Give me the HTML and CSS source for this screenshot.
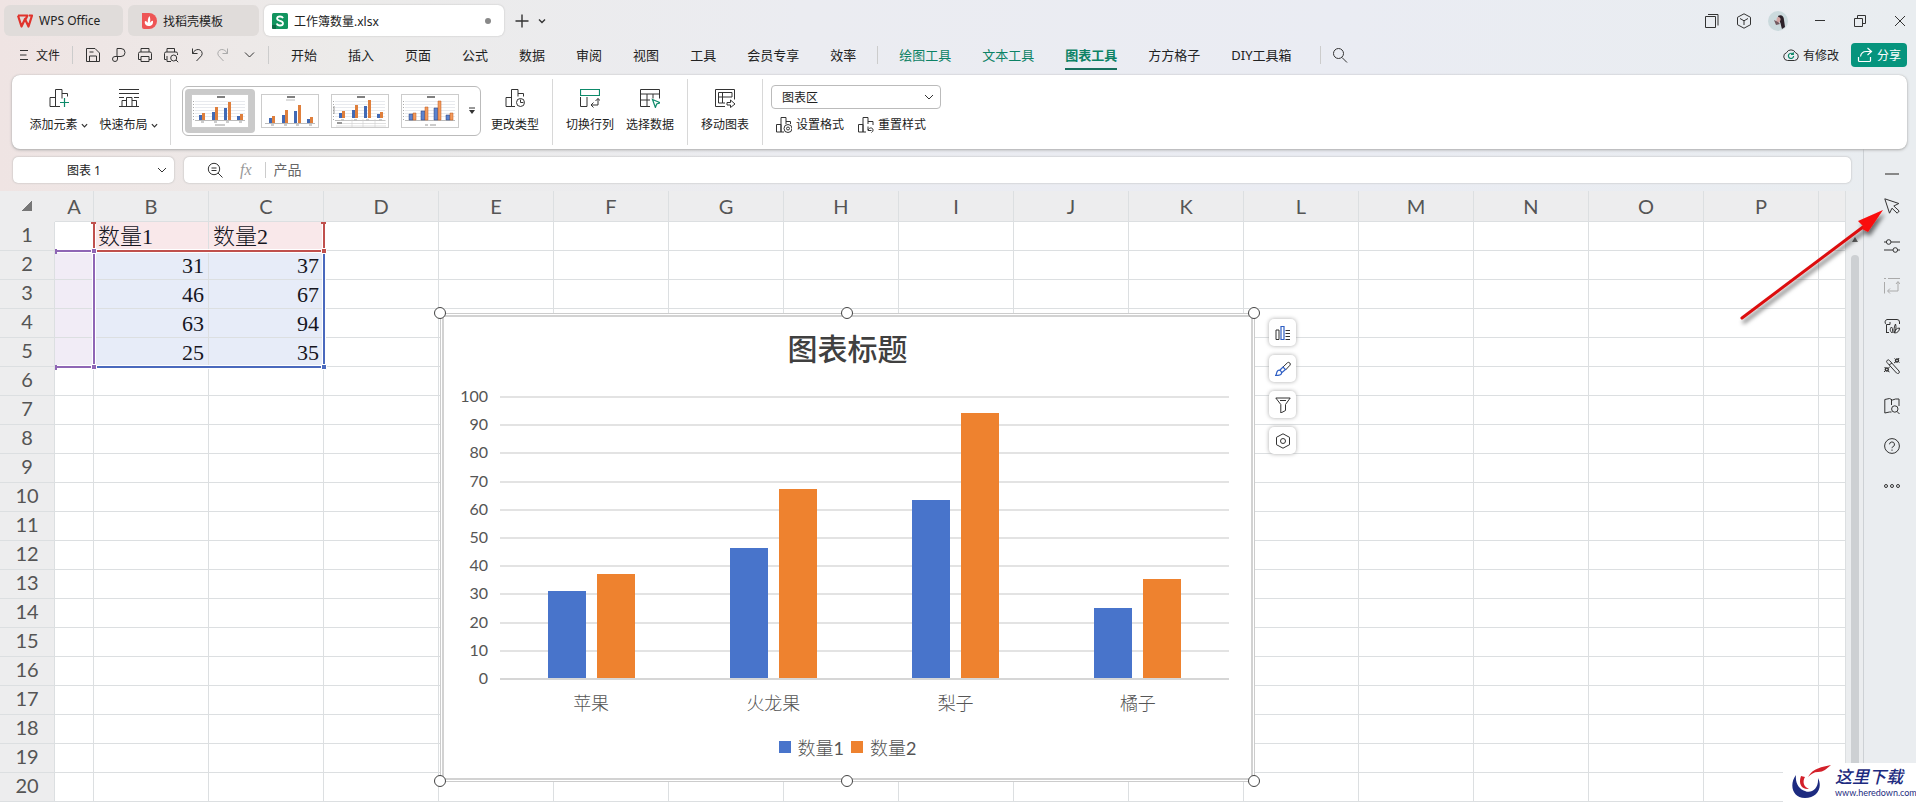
FILE: index.html
```html
<!DOCTYPE html>
<html lang="zh-CN">
<head>
<meta charset="utf-8">
<title>工作簿数量.xlsx - WPS Office</title>
<link rel="stylesheet" href="styles.css">
</head>
<body>
<header class="top">
  <div class="tabbar">
    <a class="tab tab-home" href="#"><svg class="i16" viewBox="0 0 16 16"><path d="M1 2.500h9.500L8 7.500M1 2.500l3.500 11L8 6l3.500 7.500L15 2.500h-3" fill="none" stroke="#e0332c" stroke-width="2.200" stroke-linejoin="round"/></svg>WPS Office</a>
    <a class="tab tab-docer" href="#"><svg class="i16" viewBox="0 0 16 16"><path d="M1 0h7a8 8 0 0 1 0 16H3a2 2 0 0 1-2-2z" fill="#ee5555"/><path d="M7.500 13c-4-.5-4-4-3.500-5 1.500.3 2.500 1 3 2-.6-2.800 0-5 1.500-7 1 2.500 1 4.500.3 7 .7-1.200 1.700-2 3.200-2.300C12.300 11 11 13 7.500 13z" fill="#fff"/></svg>找稻壳模板</a>
    <a class="tab tab-file" href="#"><svg class="i16" viewBox="0 0 16 16"><rect width="16" height="16" rx="1.500" fill="#12945f"/><path d="M0 12h4v4H1.500A1.500 1.500 0 0 1 0 14.500z" fill="#0c6b45"/><path d="M11 5.200C10.500 4 9.500 3.500 8 3.500c-1.700 0-2.900.8-2.900 2.100C5.100 8.700 11 7 11 10.200c0 1.500-1.300 2.300-3 2.300-1.600 0-2.800-.7-3.200-2" fill="none" stroke="#fff" stroke-width="1.800"/></svg><span class="grow">工作簿数量.xlsx</span><i class="dot"></i></a>
    <button class="bare" aria-label="新建"><svg class="i16" viewBox="0 0 16 16"><path d="M8 1.500v13M1.500 8h13" class="s2"/></svg></button>
    <button class="bare" aria-label="标签列表"><svg class="i8" viewBox="0 0 8 8"><path d="M1 2.500l3 3 3-3" class="s2"/></svg></button>
    <div class="window">
      <button class="bare" aria-label="窗口"><svg class="i16" viewBox="0 0 16 16"><path d="M1.500 3.500h10v11h-10zM4 1.500h10v11" class="s"/></svg></button>
      <button class="bare" aria-label="应用"><svg class="i16" viewBox="0 0 16 16"><path d="M8 .8l6.500 3.500v7.400L8 15.200l-6.500-3.500V4.300zM4 5.500l4 2.300 4-2.300M8 7.800V12" class="s"/></svg></button>
      <button class="bare" aria-label="账户"><svg class="i20" viewBox="0 0 20 20"><circle cx="10" cy="10" r="10" fill="#cbdadd"/><path d="M10 5c3-2 6 0 6 4l1 7-3 2c-1-3-1-5-2-7z" fill="#2b2129"/><path d="M9 6.500c2-1.500 4 0 3.500 2.500L11 12 8 11z" fill="#d3a6a4"/><path d="M6 9l4 2 2 2-4 1z" fill="#735a60"/></svg></button>
      <button class="bare" aria-label="最小化"><svg class="i16" viewBox="0 0 16 16"><path d="M3 7.500h10" class="s"/></svg></button>
      <button class="bare" aria-label="还原"><svg class="i16" viewBox="0 0 16 16"><path d="M2.500 5.500h8v8h-8zM5.500 5.500v-3h8v8h-3" class="s"/></svg></button>
      <button class="bare" aria-label="关闭"><svg class="i16" viewBox="0 0 16 16"><path d="M3 3l10 10M13 3L3 13" class="s"/></svg></button>
    </div>
  </div>
  <nav class="menubar">
    <button class="file"><svg viewBox="0 0 10 12" width="10" height="12"><path d="M1 1.500h8M1 6h6.500M1 10.500h8" class="s"/></svg>文件</button>
    <i class="rule"></i>
    <div class="qat">
      <button class="bare" aria-label="保存"><svg class="i16" viewBox="0 0 16 16"><path d="M1.500 1.500h8.500l4.500 4.500v8.500h-13zM4.500 14.500V9h7v5.500M4.500 5h4" class="s"/></svg></button>
      <button class="bare" aria-label="导出"><svg class="i16" viewBox="0 0 16 16"><path d="M6 10V1.500h4a4 4 0 0 1 0 8H4a2.500 2.500 0 1 0 2.500 2.500V9.500" class="s"/></svg></button>
      <button class="bare" aria-label="打印"><svg class="i16" viewBox="0 0 16 16"><path d="M4 5V1.500h8V5M4 12.500H1.500v-6A1.500 1.500 0 0 1 3 5h10a1.500 1.500 0 0 1 1.500 1.500v6H12M4 9.500h8v5H4z" class="s"/></svg></button>
      <button class="bare" aria-label="打印预览"><svg class="i16" viewBox="0 0 16 16"><path d="M4 5V1.500h7.500V5M3.500 12.500h-2v-6A1.500 1.500 0 0 1 3 5h10a1.500 1.500 0 0 1 1.500 1.500V8M4 9v5.500h4M13 13l2.200 2.200" class="s"/><circle cx="10.700" cy="11" r="3" class="s"/></svg></button>
      <button class="bare" aria-label="撤销"><svg class="i16" viewBox="0 0 16 16"><path d="M3.500 1.500v5h5M3.500 6.500C5 3.800 7 2.500 9.200 2.500a4 4 0 0 1 3.300 6.200L7.500 14" class="s"/></svg></button>
      <button class="bare faint" aria-label="恢复"><svg class="i16" viewBox="0 0 16 16"><path d="M12.500 1.500v5h-5M12.500 6.500C11 3.800 9 2.500 6.800 2.500a4 4 0 0 0-3.300 6.200L8.500 14" class="s"/></svg></button>
      <button class="bare" aria-label="更多"><svg class="i16" viewBox="0 0 16 16"><path d="M4 5.500l4.500 4.500L13 5.500" class="s"/></svg></button>
    </div>
    <i class="rule rule-wide"></i>
    <div class="menus">
      <a href="#">开始</a><a href="#">插入</a><a href="#">页面</a><a href="#">公式</a><a href="#">数据</a><a href="#">审阅</a><a href="#">视图</a><a href="#">工具</a><a href="#">会员专享</a><a href="#">效率</a>
    </div>
    <i class="rule rule-mid"></i>
    <div class="menus">
      <a class="green" href="#">绘图工具</a><a class="green" href="#">文本工具</a><a class="green on" href="#">图表工具</a><a href="#">方方格子</a><a href="#">DIY工具箱</a>
    </div>
    <i class="rule rule-end"></i>
    <button class="bare" aria-label="搜索"><svg class="i16" viewBox="0 0 16 16"><circle cx="6.500" cy="6.500" r="5" class="s"/><path d="M10 10.500l5 5" class="s"/></svg></button>
    <div class="actions">
      <button class="status"><svg class="i16" viewBox="0 0 16 16"><path d="M4.500 13.500a4 4 0 0 1-1-7.800 5 5 0 0 1 9 0 4 4 0 0 1-1 7.800z" class="s"/><path d="M10 7.200A2.600 2.600 0 1 0 10.600 9M10.300 5.200v2.300H8" class="g"/></svg>有修改</button>
      <button class="share"><svg class="i16" viewBox="0 0 16 16"><path d="M10.500 1l4 3.500-4 3.500M14 4.500H9c-3 0-5 2-5.500 5M1.500 10v3.500a1 1 0 0 0 1 1h10a1 1 0 0 0 1-1V10" fill="none" stroke="#fff" stroke-width="1.200"/></svg>分享</button>
    </div>
  </nav>
</header>

<section class="ribbon">
  <div class="group group-first">
    <button class="tool"><svg class="i20" viewBox="0 0 20 20"><path d="M1 18.500v-9h5.500v9zM6.500 18.500V1.500H13v9M13 5.500h5.500v3M6.500 18.500H11" class="s"/><path d="M15.500 10v9M11 14.500h9" class="g"/></svg><span>添加元素<svg class="caret" viewBox="0 0 8 8"><path d="M1 2.500l3 3 3-3" class="s2"/></svg></span></button>
    <button class="tool"><svg class="i20" viewBox="0 0 20 20"><path d="M0 1.500h20M0 5.500h20M0 9.500h5M15 9.500h5M0 18.500h20M3 18.500v-6h4.500M7.500 18.500v-9H13v9M13 12.500h4.500v6" class="s"/></svg><span>快速布局<svg class="caret" viewBox="0 0 8 8"><path d="M1 2.500l3 3 3-3" class="s2"/></svg></span></button>
  </div>
  <div class="group group-style">
    <div class="gallery">
      <button class="thumb picked" aria-label="样式 1"><svg viewBox="0 0 56 32"><use href="#mini-back"/><use href="#mini-bars"/><path d="M23 30h10" stroke="#999"/></svg></button>
      <button class="thumb" aria-label="样式 2"><svg viewBox="0 0 56 32"><rect width="56" height="32" fill="#fff"/><path d="M25 2h8" stroke="#555" stroke-width="1.500"/><path d="M24 5h9" stroke="#bbb"/><use href="#mini-bars" y="3"/><path d="M3 28.500h50" stroke="#bbb"/></svg></button>
      <button class="thumb" aria-label="样式 3"><svg viewBox="0 0 56 32"><use href="#mini-back"/><use href="#mini-bars" y="-2"/><path d="M8 25.500h46M8 28.500h46M4 31h50M20 24v8M31 24v8M43 24v8" stroke="#ccc" stroke-width=".6"/><path d="M2 11v8" stroke="#999"/><path d="M5 28h5" stroke="#999" stroke-width="2"/></svg></button>
      <button class="thumb" aria-label="样式 4"><svg viewBox="0 0 56 32"><use href="#mini-back"/><g stroke="#283f76" stroke-width=".5" fill="#5b83cf"><path d="M7 19h4v6H7zM19 16h4v9h-4zM32 13h4v12h-4zM44 20h4v5h-4z"/></g><g stroke="#bd5719" stroke-width=".5" fill="#f29b5e"><path d="M11 18h3v7h-3zM23 12h3v13h-3zM36 6h3v19h-3zM48 18h3v7h-3z"/></g><path d="M23 30h3M28 30h6" stroke="#999"/></svg></button>
      <button class="more" aria-label="更多样式"><svg viewBox="0 0 6 8" width="6" height="8"><path d="M0 1h6" stroke="#333"/><path d="M0 3h6L3 7z" fill="#333"/></svg></button>
    </div>
    <button class="tool"><svg class="i20" viewBox="0 0 20 20"><path d="M1 18.500v-9h5.500v9zM6.500 18.500V1.500H13v7M13 5.500h5.500v3M6.500 18.500H10" class="s"/><circle cx="15.500" cy="14.500" r="4" class="s"/><path d="M15.500 11.500v3h3" class="s"/></svg><span>更改类型</span></button>
  </div>
  <div class="group">
    <button class="tool"><svg class="i20" viewBox="0 0 20 20"><path d="M.5 1.500h19v6H.5z" class="g"/><path d="M.5 9v9.500H7V9M18 10.500v6.500h-7M15.500 13l2.500-2.500 2.500 2.500M13.500 14.500L11 17l2.500 2.500" class="s"/></svg><span>切换行列</span></button>
    <button class="tool"><svg class="i20" viewBox="0 0 20 20"><path d="M10 18.500H.5v-17h19v9M.5 6h19M.5 12H10M7 6v12.500M13 6v4.500" class="s"/><path d="M12.500 11.500l8 3.300-3.800 1.200-1.300 3.500z" class="g"/></svg><span>选择数据</span></button>
  </div>
  <div class="group">
    <button class="tool"><svg class="i20" viewBox="0 0 20 20"><path d="M10 18.500H.500v-17h19v10M3.500 15V4.500H17V9H3.500M7.500 4.500V15h-4M7.500 15H10M12 14.500h3.500V12l4.500 4-4.500 3.500V17H12z" class="s"/></svg><span>移动图表</span></button>
  </div>
  <div class="format">
    <div class="combo"><select aria-label="图表元素"><option>图表区</option></select><svg class="i8 chev" viewBox="0 0 8 8"><path d="M0 2l4 4 4-4" class="s"/></svg></div>
    <div class="links">
      <button class="link"><svg class="i16" viewBox="0 0 16 16"><path d="M.5 15V7.500H5V15zM5 15V.5h5V7M10 4.500h4.500V7M5 15h3" class="s"/><circle cx="12" cy="11.500" r="4" class="s"/><circle cx="12" cy="11.500" r="1.500" class="s"/></svg>设置格式</button>
      <button class="link"><svg class="i16" viewBox="0 0 16 16"><path d="M.5 15V7.500H5V15zM5 15V.5h5V7M10 4.500h5V8M5 15h3M10 9.500v4h3.500M10 13c1.500-3 5-2.500 5 0 0 1.500-.8 2-1.500 2.500" class="s"/></svg>重置样式</button>
    </div>
  </div>
</section>

<main class="main">
  <div class="work">
    <div class="formula">
      <div class="namebox"><input aria-label="名称框" value="图表 1"><svg class="i8 chev" viewBox="0 0 8 8"><path d="M0 2l4 4 4-4" class="s"/></svg></div>
      <div class="fxbox">
        <button class="bare" aria-label="查找"><svg class="i16" viewBox="0 0 16 16"><circle cx="7" cy="7" r="5.700" class="s"/><path d="M11 11l4.500 4.500M4.500 6h5M4.500 8.500h5" class="s"/></svg></button>
        <span class="fx">fx</span><i class="rule rule-fx"></i>
        <input aria-label="编辑栏" value="产品">
      </div>
    </div>
    <div class="sheet">
      <table class="cells">
        <colgroup id="cols"></colgroup>
        <thead><tr id="heads"></tr></thead>
        <tbody id="rows"></tbody>
      </table>
      <div class="scroll"><svg viewBox="0 0 8 6" width="8" height="6"><path d="M4 0l3 5H1z" fill="#666"/></svg><i></i></div>
      <svg class="ranges" width="290" height="190" viewBox="0 0 290 190">
        <g fill="none" stroke-width="4" stroke="#fff"><path d="M39 31v29h230V31M2 60h37v116H2M269 60v116H39"/></g>
        <g fill="none" stroke-width="2"><path d="M40 60h229v116H40" stroke="#4a69bd"/><path d="M39 32v28h230V32" stroke="#c0504d"/><path d="M2 60h37v116H2" stroke="#8f66b5"/></g>
        <g stroke="#fff"><path d="M266.500 173.500h5v5h-5z" fill="#4a69bd"/><path d="M266.500 57.500h5v5h-5z" fill="#c0504d"/><path d="M36.500 57.500h5v5h-5zM36.500 173.500h5v5h-5z" fill="#8f66b5"/></g>
        <path d="M36 31h5v2h-5zM266 31h5v2h-5z" fill="#c0504d"/><path d="M0 58h2v5H0zM0 174h2v5H0z" fill="#8f66b5"/>
      </svg>
      <figure class="chart">
        <div class="chart-in">
          <figcaption>图表标题</figcaption>
          <div class="plotrow">
            <ol class="axis"><li>100</li><li>90</li><li>80</li><li>70</li><li>60</li><li>50</li><li>40</li><li>30</li><li>20</li><li>10</li><li>0</li></ol>
            <div class="plot">
              <div class="lines"><i></i><i></i><i></i><i></i><i></i><i></i><i></i><i></i><i></i><i></i><i></i></div>
              <div class="bars">
                <div><b style="height:31%"></b><b style="height:37%"></b></div>
                <div><b style="height:46%"></b><b style="height:67%"></b></div>
                <div><b style="height:63%"></b><b style="height:94%"></b></div>
                <div><b style="height:25%"></b><b style="height:35%"></b></div>
              </div>
            </div>
          </div>
          <div class="cats"><span>苹果</span><span>火龙果</span><span>梨子</span><span>橘子</span></div>
          <div class="legend"><i></i><span>数量<em>1</em></span><i class="two"></i><span>数量<em>2</em></span></div>
        </div>
        <i class="h tl"></i><i class="h tc"></i><i class="h tr"></i><i class="h bl"></i><i class="h bc"></i><i class="h br"></i>
        <div class="chart-tools">
          <button aria-label="图表元素"><svg class="i16" viewBox="0 0 16 16"><path d="M1 5h3v9.500H1zM10.500 5.500H15M10.500 8.500H15M10.500 11.500H15M10.500 14.500H15" class="s"/><path d="M6 1.500h3v13H6z" class="b"/></svg></button>
          <button aria-label="图表样式"><svg class="i16" viewBox="0 0 16 16"><path d="M8 6l4.500-4.300a1.800 1.800 0 0 1 2.500 2.500L10.500 9" class="s"/><path d="M.5 14.500c1.500-1 .5-3.500 2.500-5 1.500-1 4 .5 3.500 3-.5 2-3 2-6 2zM5 9l3-3 2.500 2.500-3.500 3" class="b"/></svg></button>
          <button aria-label="图表筛选器"><svg class="i16" viewBox="0 0 16 16"><path d="M.8 1h14.400L10.500 7.500v6L5.800 16V7.500zM5 3.500h6" class="s"/></svg></button>
          <button aria-label="设置图表区域格式"><svg class="i16" viewBox="0 0 16 16"><path d="M8 .8l6.500 3.500v7.400L8 15.200l-6.500-3.500V4.300z" class="s"/><circle cx="8" cy="8" r="2.500" class="s"/></svg></button>
        </div>
      </figure>
    </div>
  </div>
  <aside class="side">
    <button class="bare fold" aria-label="收起"><svg class="i16" viewBox="0 0 16 16"><path d="M1 8h14" stroke="#888" stroke-width="2"/></svg></button>
    <button class="bare" aria-label="选择"><svg class="i16" viewBox="0 0 16 16"><path d="M.8.800l14 4.700-5 2.500 5.400 5-2 2.200-5.200-5-2.500 5z" class="s"/></svg></button>
    <button class="bare" aria-label="属性"><svg class="i16" viewBox="0 0 16 16"><path d="M0 4h2.500M7 4h9M0 12h9M13.500 12H16" class="s"/><circle cx="4.700" cy="4" r="2.300" class="s"/><circle cx="11.300" cy="12" r="2.300" class="s"/></svg></button>
    <button class="bare faint" aria-label="转换"><svg class="i16" viewBox="0 0 16 16"><path d="M0 .5h2M4 .5h12M.5 4v11.500M14 4v9H4M12 6l2-2.500L16 6M6 10.500L3.500 13 6 15.500" class="s"/></svg></button>
    <button class="bare" aria-label="分析"><svg class="i16" viewBox="0 0 16 16"><path d="M2 14.500h3M2.500 14.500v-8A2.700 2.700 0 0 1 3 1.500h10a2.500 2.500 0 0 1 2.500 2.500v2M3 6.500h3V4M7.500 9c-2 2-1.500 4 .5 6 1-2 1-4-.5-6zM10 15c0-4 0-6 1.500-9 1 3 .5 6-1.500 9zM10.500 15c.5-3 2-5 5-5 0 3-2 5-5 5z" class="s"/></svg></button>
    <button class="bare" aria-label="工具"><svg class="i16" viewBox="0 0 16 16"><path d="M3 4.500a1.600 1.600 0 0 1 2.500-2L15 13a1.600 1.600 0 0 1-2.500 2zM5 7l3-2" class="s"/><circle cx="13" cy="2.500" r="1.500" class="s2"/><circle cx="2.800" cy="11.500" r="1.500" class="s2"/><path d="M14 1l1.500-1M12 3.500L10 5M1.500 12.500L0 14M4 10.500L6 8.500M1.500 10l-1-1M4 13l1.500 1M14.500 3.500l1 1M11.500 1.500L10.500.500" class="s"/></svg></button>
    <button class="bare" aria-label="帮助文档"><svg class="i16" viewBox="0 0 16 16"><path d="M7.500 14H5.500L.8 15V1.500l4.700-1 3 1.500 3-1h3.500v7M7.500 2v5" class="s"/><circle cx="10.800" cy="11" r="3.200" class="s"/><path d="M13 13.500l2.500 2.500" class="s"/></svg></button>
    <button class="bare" aria-label="帮助"><svg class="i16" viewBox="0 0 16 16"><circle cx="8" cy="8" r="7.400" class="s"/><path d="M5.500 6.300a2.500 2.500 0 1 1 3.300 2.500c-.6.300-.8.700-.8 1.400M8 11.500v1.300" class="s"/></svg></button>
    <button class="bare" aria-label="更多"><svg class="i16" viewBox="0 0 16 16"><circle cx="2" cy="8" r="1.500" class="s"/><circle cx="8" cy="8" r="1.500" class="s"/><circle cx="14" cy="8" r="1.500" class="s"/></svg></button>
  </aside>
</main>

<svg class="pointer" viewBox="0 0 160 130" width="160" height="130">
  <defs><filter id="sh" x="-20%" y="-20%" width="150%" height="150%"><feDropShadow dx="2" dy="4" stdDeviation="2" flood-opacity=".55"/></filter></defs>
  <g filter="url(#sh)"><path d="M7 114L128 23" stroke="#dc0a0f" stroke-width="3" stroke-linecap="round"/><path d="M148 6l-25 11 5 5-1 3 6 3z" fill="#f90b0b"/></g>
</svg>
<div class="brand">
  <svg viewBox="0 0 42 36" width="42" height="36"><path d="M6 11c-7 9-4 23 9 23 12 0 18-10 13-20 1 11-7 16-13 13C9 25 5 19 6 11z" fill="#1d2b80"/><path d="M11 12c-3 8 1 14 8 13-5-2-7-7-4-12zM18 13C23 4 32 3 41 1c-5 4-7 7-13 7-4 0-7 2-10 5z" fill="#d3202a"/></svg>
  <p><strong>这里下载</strong><small>www.heredown.com</small></p>
</div>

<svg width="0" height="0" class="defs">
  <defs>
    <g id="mini-back"><path d="M0 0h56v32H0z" fill="#fff"/><path d="M25 2h8" stroke="#555" stroke-width="1.500"/><path d="M3 6.500h50M3 9.500h50M3 12.500h50M3 15.500h50M3 18.500h50M3 21.500h50" stroke="#e8eaee"/><path d="M1.500 6v19" stroke="#aaa" stroke-dasharray="1 2"/><path d="M3 25.500h50" stroke="#bbb"/></g>
    <g id="mini-bars"><path d="M7 20h3v5H7zM20 17h3v8h-3zM32 13h3v12h-3zM45 21h3v4h-3z" fill="#4169b5"/><path d="M10 18h3v7h-3zM23 12h3v13h-3zM36 7h3v18h-3zM48 19h3v6h-3z" fill="#df7f3c"/><path d="M9 27h3M22 27h3M34 27h3M47 27h3" stroke="#999"/></g>
  </defs>
</svg>
<script src="sheet.js"></script>
</body>
</html>
```

FILE: styles.css
```css
* { box-sizing: border-box; }
body {
  margin: 0; height: 100vh; overflow: hidden; position: relative;
  display: flex; flex-direction: column;
  font-family: "Noto Sans", "Noto Sans CJK SC", sans-serif;
  font-size: 12px; color: #222;
  background: linear-gradient(90deg, #efe4e3 0, #ecebea 18%, #ebecf1 42%, #eaecf3 70%, #e9edf0 100%);
}
button, input, select { font: inherit; color: inherit; border: 0; padding: 0; margin: 0; background: none; }
a { color: inherit; text-decoration: none; }
svg { display: block; flex: none; }
.defs { position: absolute; }
.s, .s2, .g, .b { fill: none; stroke: #333; stroke-width: 1; }
.s2 { stroke-width: 1.400; }
.g { stroke: #0d8a6a; stroke-width: 1.200; }
.b { stroke: #2f5fc4; stroke-width: 1.200; }
.faint .s { stroke: #aaa; }
.i8 { width: 8px; height: 8px; }
.i16 { width: 16px; height: 16px; }
.i20 { width: 20px; height: 20px; }
.bare { display: flex; align-items: center; justify-content: center; }
.rule { width: 1px; height: 18px; background: #ccc; flex: none; }

.tabbar { display: flex; align-items: center; height: 37px; padding: 5px 8px 1px 4px; }
.tab { display: flex; align-items: center; gap: 6px; height: 31px; padding: 0 13px; border-radius: 6px; background: #e0dcda; margin-right: 5px; }
.tab-home { width: 119px; }
.tab-docer { width: 131px; }
.tab-file { width: 240px; padding: 0 13px 0 8px; background: #fff; box-shadow: 0 0 2px #bbb; margin-right: 10px; }
.grow { flex: 1; }
.dot { width: 6px; height: 6px; border-radius: 50%; background: #888; }
.tab-file + .bare { margin-right: 8px; }
.window { margin-left: auto; display: flex; align-items: center; gap: 24px; }
.window .bare:nth-child(1) { margin-right: -8px; }
.window .bare:nth-child(2) { margin-right: -8px; }

.menubar { display: flex; align-items: center; height: 38px; padding: 0 9px 2px 19px; }
.file { display: flex; align-items: center; gap: 7px; margin-right: 12px; }
.qat { display: flex; gap: 10px; margin-left: 12px; }
.rule-wide { margin: 0 22px 0 11px; }
.menus { display: flex; gap: 31px; font-size: 13px; line-height: 26px; }
.rule-mid { margin: 0 21px; }
.rule-end { margin: 0 11px 0 28px; }
.green { color: #0c8265; }
.on { font-weight: 700; box-shadow: 0 2px #17705e; }
.actions { margin-left: auto; display: flex; align-items: center; gap: 12px; }
.status, .share { display: flex; align-items: center; gap: 4px; }
.share { height: 24px; padding: 0 6px; background: #06947d; color: #fff; border-radius: 4px; }

.ribbon { display: flex; align-items: center; height: 74px; margin: 0 9px 0 12px; background: #fff; border-radius: 8px; box-shadow: 0 1px 3px #aaa, 0 0 1px #aaa; position: relative; z-index: 2; }
.group { display: flex; align-items: center; gap: 12px; height: 66px; padding: 0 13px 2px; border-right: 1px solid #d8d8d8; }
.group-first { padding: 0 13px 2px 18px; gap: 13px; }
.group-style { padding-left: 11px; gap: 10px; }
.tool { display: flex; flex-direction: column; align-items: center; gap: 8px; white-space: nowrap; line-height: 18px; }
.tool span { display: flex; align-items: center; gap: 3px; }
.group-first .tool { width: 57px; }
.caret { width: 7px; height: 7px; }
.gallery { display: flex; align-items: center; height: 50px; padding: 0 2px; border: 1px solid #bbb; border-radius: 6px; }
.thumb { width: 70px; height: 44px; display: flex; align-items: center; justify-content: center; border-radius: 4px; }
.thumb svg { width: 56px; height: 32px; outline: 1px solid #ccc; }
.picked { background: #cacaca; }
.more { width: 13px; display: flex; justify-content: center; }
.format { align-self: flex-start; display: flex; flex-direction: column; gap: 7px; padding: 10px 0 0 8px; }
.combo { position: relative; width: 170px; }
.combo select { appearance: none; display: block; width: 100%; height: 24px; padding: 0 10px; border: 1px solid #bbb; border-radius: 4px; background: #fff; }
.chev { position: absolute; right: 8px; top: 50%; margin-top: -4px; pointer-events: none; }
.links { display: flex; gap: 14px; padding-left: 5px; }
.link { display: flex; align-items: center; gap: 4px; line-height: 18px; }

.main { flex: 1; display: flex; min-height: 0; }
.work { flex: 1; min-width: 0; display: flex; flex-direction: column; }
.formula { display: flex; gap: 10px; height: 42px; padding: 8px 12px 8px 13px; }
.namebox, .fxbox { background: #fff; border-radius: 5px; box-shadow: 0 0 2px #aaa; position: relative; display: flex; align-items: center; }
.namebox { width: 161px; }
.namebox input { width: 142px; text-align: center; }
.fxbox { flex: 1; padding-left: 23px; }
.fx { margin: 0 13px 0 17px; font: italic 16px "Liberation Serif", serif; color: #999; }
.rule-fx { height: 16px; }
.fxbox input { flex: 1; height: 22px; padding-bottom: 2px; margin-left: 8px; font-size: 14px; color: #666; }

.sheet { flex: 1; position: relative; display: flex; min-height: 0; background: #fff; }
.cells { flex: 1; table-layout: fixed; border-collapse: separate; border-spacing: 0; width: 0; height: 611px; }
.c-num { width: 55px; }
.c-a { width: 39px; }
.c-std { width: 115px; }
.cells th, .cells td { height: 29px; padding: 0; border: solid #dcdfe1; border-width: 0 1px 1px 0; white-space: nowrap; }
.cells th { background: #ededee; color: #555; font: 20px/24px Lato, sans-serif; vertical-align: top; }
.cells thead th { height: 31px; line-height: 30px; }
.cells thead th:first-child { border-color: #ededee; vertical-align: middle; }
.cells td { font: 300 22px/28px "Liberation Serif", "Noto Sans CJK SC", serif; color: #16161f; padding: 1px 4px 0; line-height: 27px; text-align: right; overflow: hidden; }
.cells td.name { background: #f9e8ea; text-align: left; }
.cells td.val { background: #e7ecf8; }
.cells td.cat { background: #f1ecf6; }
.corner { display: block; width: 10px; height: 10px; margin: 0 auto; background: linear-gradient(135deg, transparent 50%, #777 50%); }
.scroll { width: 17px; background: #ebedef; display: flex; flex-direction: column; align-items: center; gap: 12px; padding-top: 46px; }
.scroll i { flex: 1; width: 8px; background: #cdd0d3; border-radius: 4px 4px 0 0; }
.ranges { position: absolute; left: 55px; top: 0; }

.chart { position: absolute; left: 440px; top: 122px; width: 815px; height: 469px; margin: 0; padding: 1px; border: 1px solid #ccc; background: #fff; color: #555; }
.chart-in { height: 100%; border: 2px solid #d2d2d2; display: flex; flex-direction: column; }
figcaption { text-align: center; font: 500 30px/60px "Noto Sans CJK SC", sans-serif; color: #404040; }
.plotrow { display: flex; gap: 12px; padding: 5px 22px 0 0; }
.axis { list-style: none; margin: 0; padding: 0; width: 44px; height: 310px; display: flex; flex-direction: column; justify-content: space-between; text-align: right; font: 16px/28px Lato, sans-serif; }
.plot { flex: 1; position: relative; height: 284px; margin-top: 14px; }
.lines { height: 100%; display: flex; flex-direction: column; justify-content: space-between; }
.lines i { height: 2px; background: #e3e3e3; }
.lines i:last-child { background: #d6d6d6; }
.bars { position: absolute; inset: 0 0 2px; display: grid; grid-template-columns: repeat(4, 1fr); }
.bars div { display: flex; align-items: flex-end; justify-content: center; gap: 11px; }
.bars b { width: 38px; background: #4874cb; }
.bars b + b { background: #ee822f; }
.cats { display: grid; grid-template-columns: repeat(4, 1fr); margin: -4px 22px 0 56px; text-align: center; font: 300 18px/28px "Noto Sans CJK SC", sans-serif; }
.legend { display: flex; align-items: center; justify-content: center; gap: 7px; margin-top: 17px; font: 300 18px/28px "Noto Sans CJK SC", sans-serif; }
.legend i { width: 12px; height: 12px; background: #4874cb; }
.legend i.two { background: #ee822f; }
.legend em { font: 18px Lato, sans-serif; }
.h { position: absolute; width: 12px; height: 12px; border: 1px solid #444; border-radius: 50%; background: #fff; }
.tl, .tc, .tr { top: -7px; }
.bl, .bc, .br { bottom: -6px; }
.tl, .bl { left: -7px; }
.tc, .bc { left: 400px; }
.tr, .br { right: -6px; }
.chart-tools { position: absolute; left: 828px; top: 5px; display: flex; flex-direction: column; gap: 9px; }
.chart-tools button { width: 27px; height: 27px; display: flex; align-items: center; justify-content: center; background: #fff; border-radius: 5px; box-shadow: 0 0 4px #aaa; }

.side { width: 53px; border-left: 1px solid #cdd1d5; display: flex; flex-direction: column; align-items: center; padding: 13px 0 0 4px; background: #eaedf0; }
.side .bare { height: 40px; width: 40px; }
.side .fold { height: 24px; }

.pointer { position: absolute; right: 21px; top: 204px; z-index: 3; }
.brand { position: absolute; right: 0; bottom: 0; z-index: 3; display: flex; gap: 3px; align-items: center; padding: 1px 6px 2px 7px; background: #fff; color: #1d2b80; }
.brand p { margin: 0; width: 75px; }
.brand strong, .brand small { display: block; }
.brand strong { font: italic 500 17px/22px "Noto Sans CJK SC", sans-serif; }
.brand small { font: 9px/12px Lato, sans-serif; }
```

FILE: sheet.js
```js
const letters = [..."ABCDEFGHIJKLMNOP"];
const data = {
  B: ["数量1", 31, 46, 63, 25],
  C: ["数量2", 37, 67, 94, 35]
};

const widths = ["c-num", "c-a", ...letters.slice(1).map(() => "c-std"), ""];
document.getElementById("cols").innerHTML = widths.map(w => `<col class="${w}">`).join("");

document.getElementById("heads").innerHTML =
  '<th><span class="corner"></span></th>' +
  letters.map(l => `<th scope="col">${l}</th>`).join("") + "<th></th>";

const cell = (letter, row) => {
  if (data[letter] && row < 5) {
    return `<td class="${row ? "val" : "name"}">${data[letter][row]}</td>`;
  }
  return letter === "A" && row > 0 && row < 5 ? '<td class="cat"></td>' : "<td></td>";
};

document.getElementById("rows").innerHTML = Array.from({ length: 20 }, (_, r) =>
  `<tr><th scope="row">${r + 1}</th>${letters.map(l => cell(l, r)).join("")}<td></td></tr>`
).join("");
```
